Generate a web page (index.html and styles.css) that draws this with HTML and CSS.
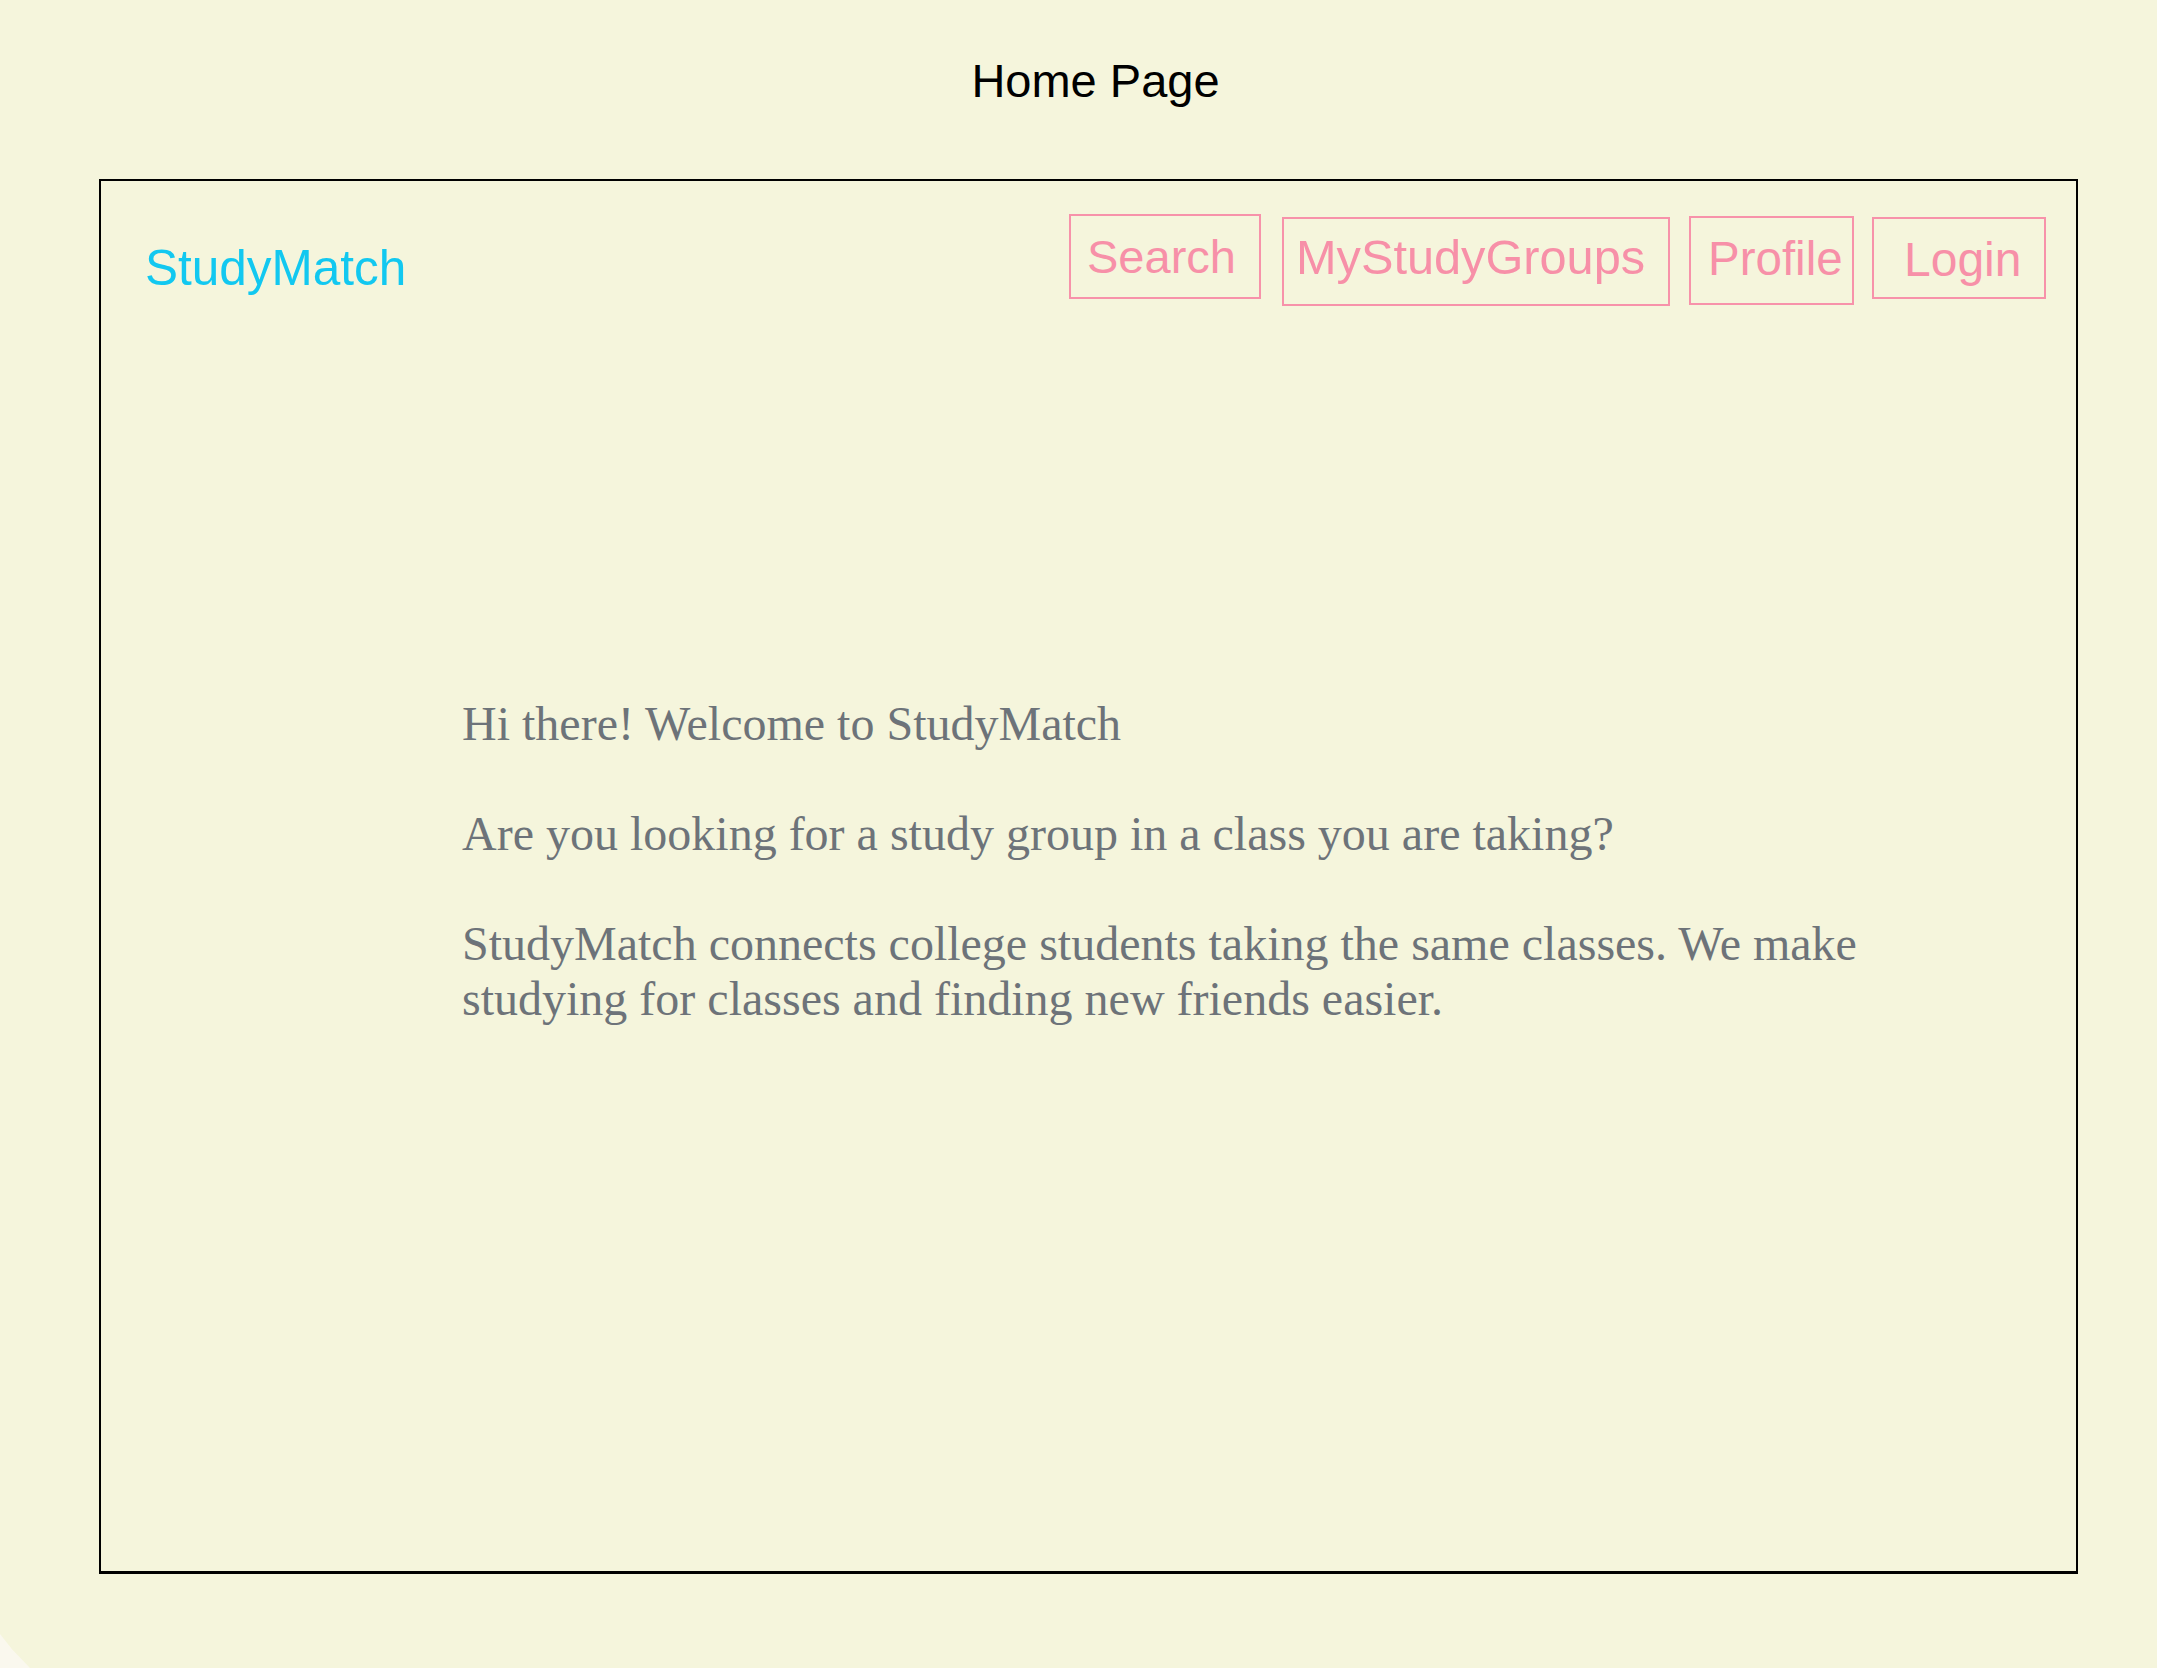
FILE: index.html
```html
<!DOCTYPE html>
<html lang="en">
<head>
<meta charset="utf-8">
<title>Home Page</title>
<link rel="stylesheet" href="styles.css">
</head>
<body>
<div class="page">
  <h1 class="page-title">Home Page</h1>
  <div class="frame">
    <header class="header">
      <div class="brand">StudyMatch</div>
      <nav class="nav">
        <a class="nav-btn nav-search">Search</a>
        <a class="nav-btn nav-groups">MyStudyGroups</a>
        <a class="nav-btn nav-profile">Profile</a>
        <a class="nav-btn nav-login">Login</a>
      </nav>
    </header>
    <main class="intro">
      <p>Hi there! Welcome to StudyMatch</p>
      <p>Are you looking for a study group in a class you are taking?</p>
      <p>StudyMatch connects college students taking the same classes. We make studying for classes and finding new friends easier.</p>
    </main>
  </div>
</div>
<div class="corner"></div>
</body>
</html>
```

FILE: styles.css
```css
html, body {
  margin: 0;
  padding: 0;
  background: #f5f5dc;
}
body {
  width: 2157px;
  height: 1668px;
  overflow: hidden;
  position: relative;
  font-family: "Liberation Sans", Arial, sans-serif;
}
.page {
  padding: 54px 79px 0 99px;
}
.page-title {
  margin: 0 0 71px 0;
  padding-left: 14px;
  font-weight: normal;
  font-size: 47px;
  line-height: 54px;
  height: 54px;
  text-align: center;
  color: #000;
}
.frame {
  box-sizing: border-box;
  width: 1979px;
  height: 1395px;
  border: 2px solid #000;
  border-bottom-width: 3px;
}
.header {
  display: flex;
  align-items: flex-start;
  height: 125px;
}
.brand {
  margin: 60px 0 0 44px;
  font-size: 49.5px;
  line-height: 54px;
  color: #12c8f0;
}
.nav {
  margin-left: auto;
  margin-right: 30px;
  display: flex;
  align-items: flex-start;
}
.nav-btn {
  box-sizing: border-box;
  display: block;
  border: 2px solid #f792aa;
  color: #f790a8;
  font-size: 47px;
  line-height: 54px;
  white-space: nowrap;
}
.nav-search {
  width: 192px;
  height: 85px;
  margin-top: 33px;
  padding: 14px 0 0 16px;
}
.nav-groups {
  width: 388px;
  height: 89px;
  margin-top: 36px;
  margin-left: 21px;
  padding: 11px 0 0 12px;
  font-size: 48.7px;
}
.nav-profile {
  width: 165px;
  height: 89px;
  margin-top: 35px;
  margin-left: 19px;
  padding: 14px 0 0 17px;
  font-size: 47.5px;
}
.nav-login {
  width: 174px;
  height: 82px;
  margin-top: 36px;
  margin-left: 18px;
  padding: 14px 0 0 30px;
  font-size: 48px;
}
.intro {
  margin: 390px 0 0 361px;
  width: 1440px;
  font-family: "Liberation Serif", "Times New Roman", serif;
  font-size: 48px;
  line-height: 55px;
  color: #6d7379;
}
.intro p {
  margin: 0 0 55px 0;
}
.corner {
  position: absolute;
  left: 0;
  bottom: 0;
  width: 30px;
  height: 34px;
  background: #faf8ee;
  clip-path: polygon(0 0, 40% 45%, 100% 100%, 0 100%);
}
```
